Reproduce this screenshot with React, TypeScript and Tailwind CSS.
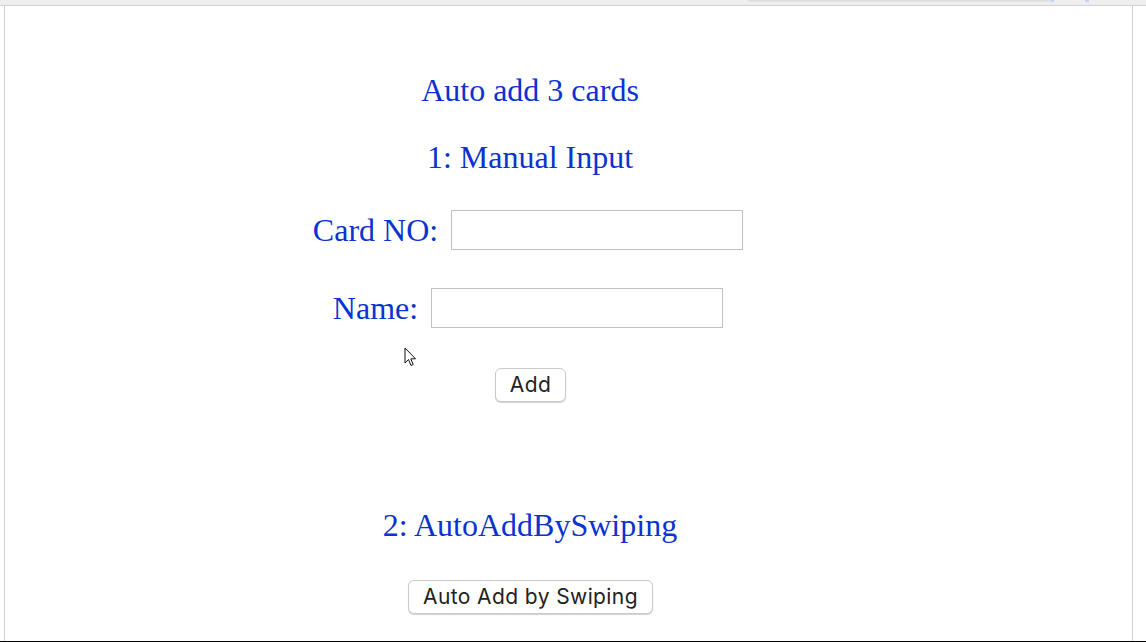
import React from "react";

const serif = { fontFamily: '"Liberation Serif", "Times New Roman", serif' };
const sans = { fontFamily: 'Inter, "Liberation Sans", Arial, sans-serif' };

function Heading({ children, className }: { children: React.ReactNode; className: string }) {
  return (
    <div className={"text-[32px] leading-[36px] text-[#0a33cf] " + className} style={serif}>
      {children}
    </div>
  );
}

function Row({ label, className }: { label: string; className: string }) {
  return (
    <div className={"flex items-center justify-center gap-[13px] pr-[4px] " + className}>
      <span className="text-[32px] leading-[36px] text-[#0a33cf]" style={serif}>
        {label}
      </span>
      <input
        type="text"
        className="w-[292px] h-[40px] border border-[#c2c2c2] bg-white outline-none"
      />
    </div>
  );
}

function Btn({ children, className }: { children: React.ReactNode; className: string }) {
  return (
    <button
      className={
        "h-[34px] px-[14px] rounded-[6px] border border-[#cacaca] bg-white text-[21px] leading-[24px] tracking-[0.4px] text-[#222] shadow-[0_1px_1px_rgba(0,0,0,0.18)] " +
        className
      }
      style={sans}
    >
      {children}
    </button>
  );
}

export default function App() {
  return (
    <div className="relative w-[1146px] h-[642px] bg-white overflow-hidden">
      {/* top strip */}
      <div className="relative h-[6px] bg-[#eeeeee] border-b border-[#d0d0d0]">
        <div className="absolute left-[748px] top-0 w-[304px] h-[2px] bg-[#e0e0e0] rounded-bl-[3px]" />
        <div className="absolute left-[1051px] top-0 w-[3px] h-[2px] bg-[#bcd6f5]" />
        <div className="absolute left-[1085px] top-0 w-[4px] h-[2px] bg-[#bcd6f5]" />
      </div>
      <div className="flex h-[635px]">
        <div className="w-[4px]" />
        <div className="w-[1129px] border-l border-r border-[#d0d0d0] bg-white">
          <div className="w-[1050px] flex flex-col items-center">
            <Heading className="mt-[66px]">Auto add 3 cards</Heading>
            <Heading className="mt-[31px]">1: Manual Input</Heading>
            <Row label="Card NO:" className="mt-[35px]" />
            <Row label="Name:" className="mt-[38px]" />
            <Btn className="mt-[40px] ml-[1px]">Add</Btn>
            <Heading className="mt-[105px]">2: AutoAddBySwiping</Heading>
            <Btn className="mt-[37px] ml-[1px]">Auto Add by Swiping</Btn>
          </div>
        </div>
      </div>
      <div className="h-[1px] bg-black" />
      {/* mouse cursor */}
      <svg className="absolute left-[404px] top-[347px]" width="14" height="20" viewBox="0 0 14 20">
        <path d="M1 1 L1 16 L4.5 12.5 L7 18.5 L9.2 17.5 L6.8 11.8 L11.5 11.8 Z" fill="#fff" stroke="#111" strokeWidth="1" strokeLinejoin="round" />
      </svg>
    </div>
  );
}
